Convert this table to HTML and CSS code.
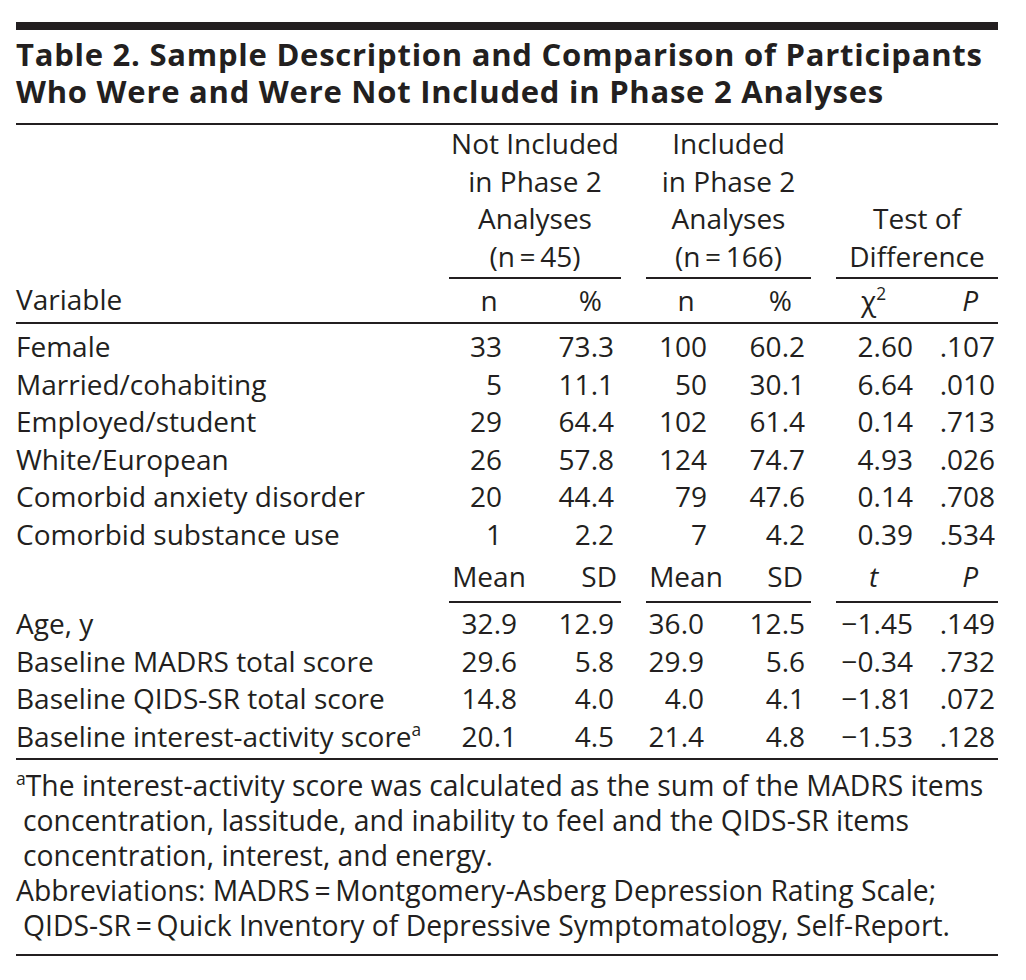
FILE: index.html
```html
<!DOCTYPE html>
<html lang="en">
<head>
<meta charset="utf-8">
<title>Table 2</title>
<link rel="stylesheet" href="styles.css">
</head>
<body>
<div class="page">
  <div class="toprule"></div>
  <h1 class="title">Table 2. Sample Description and Comparison of Participants<br>Who Were and Were Not Included in Phase 2 Analyses</h1>
  <table class="tbl">
    <colgroup>
      <col class="c-var">
      <col class="c-a">
      <col class="c-b">
      <col class="c-sp">
      <col class="c-c">
      <col class="c-d">
      <col class="c-sp">
      <col class="c-e">
      <col class="c-f">
    </colgroup>
    <thead>
      <tr class="grp">
        <th class="var"></th>
        <th colspan="2" class="gh">Not Included<br>in Phase 2<br>Analyses<br>(n&#8201;=&#8201;45)</th>
        <th class="sp"></th>
        <th colspan="2" class="gh">Included<br>in Phase 2<br>Analyses<br>(n&#8201;=&#8201;166)</th>
        <th class="sp"></th>
        <th colspan="2" class="gh">Test of<br>Difference</th>
      </tr>
      <tr class="sub first">
        <th class="var">Variable</th>
        <th class="h1">n</th>
        <th class="h2">%</th>
        <th class="sp"></th>
        <th class="h3">n</th>
        <th class="h4">%</th>
        <th class="sp"></th>
        <th class="h5">&#967;<sup>2</sup></th>
        <th class="h6"><i>P</i></th>
      </tr>
    </thead>
    <tbody>
      <tr class="top"><td class="var">Female</td><td class="n1">33</td><td class="v2">73.3</td><td class="sp"></td><td class="n3">100</td><td class="v4">60.2</td><td class="sp"></td><td class="v5">2.60</td><td class="v6">.107</td></tr>
      <tr><td class="var">Married/cohabiting</td><td class="n1">5</td><td class="v2">11.1</td><td class="sp"></td><td class="n3">50</td><td class="v4">30.1</td><td class="sp"></td><td class="v5">6.64</td><td class="v6">.010</td></tr>
      <tr><td class="var">Employed/student</td><td class="n1">29</td><td class="v2">64.4</td><td class="sp"></td><td class="n3">102</td><td class="v4">61.4</td><td class="sp"></td><td class="v5">0.14</td><td class="v6">.713</td></tr>
      <tr><td class="var">White/European</td><td class="n1">26</td><td class="v2">57.8</td><td class="sp"></td><td class="n3">124</td><td class="v4">74.7</td><td class="sp"></td><td class="v5">4.93</td><td class="v6">.026</td></tr>
      <tr><td class="var">Comorbid anxiety disorder</td><td class="n1">20</td><td class="v2">44.4</td><td class="sp"></td><td class="n3">79</td><td class="v4">47.6</td><td class="sp"></td><td class="v5">0.14</td><td class="v6">.708</td></tr>
      <tr><td class="var">Comorbid substance use</td><td class="n1">1</td><td class="v2">2.2</td><td class="sp"></td><td class="n3">7</td><td class="v4">4.2</td><td class="sp"></td><td class="v5">0.39</td><td class="v6">.534</td></tr>
      <tr class="sub mid">
        <td class="var"></td>
        <td class="h1 ul">Mean</td>
        <td class="hsd ul">SD</td>
        <td class="sp"></td>
        <td class="h3 ul">Mean</td>
        <td class="hsd4 ul">SD</td>
        <td class="sp"></td>
        <td class="h5 ul"><i>t</i></td>
        <td class="h6 ul"><i>P</i></td>
      </tr>
      <tr class="top2"><td class="var">Age, y</td><td class="m1">32.9</td><td class="v2">12.9</td><td class="sp"></td><td class="m3">36.0</td><td class="v4">12.5</td><td class="sp"></td><td class="v5">&minus;1.45</td><td class="v6">.149</td></tr>
      <tr><td class="var">Baseline MADRS total score</td><td class="m1">29.6</td><td class="v2">5.8</td><td class="sp"></td><td class="m3">29.9</td><td class="v4">5.6</td><td class="sp"></td><td class="v5">&minus;0.34</td><td class="v6">.732</td></tr>
      <tr><td class="var">Baseline QIDS-SR total score</td><td class="m1">14.8</td><td class="v2">4.0</td><td class="sp"></td><td class="m3">4.0</td><td class="v4">4.1</td><td class="sp"></td><td class="v5">&minus;1.81</td><td class="v6">.072</td></tr>
      <tr class="last"><td class="var">Baseline interest-activity score<sup class="fn">a</sup></td><td class="m1">20.1</td><td class="v2">4.5</td><td class="sp"></td><td class="m3">21.4</td><td class="v4">4.8</td><td class="sp"></td><td class="v5">&minus;1.53</td><td class="v6">.128</td></tr>
    </tbody>
  </table>
  <div class="notes">
    <p class="note"><sup class="fn">a</sup>The interest-activity score was calculated as the sum of the MADRS items<br>concentration, lassitude, and inability to feel and the QIDS-SR items<br>concentration, interest, and energy.</p>
    <p class="note">Abbreviations: MADRS&#8201;=&#8201;Montgomery-Asberg Depression Rating Scale;<br>QIDS-SR&#8201;=&#8201;Quick Inventory of Depressive Symptomatology, Self-Report.</p>
  </div>
</div>
</body>
</html>
```

FILE: styles.css
```css
html, body {
  margin: 0;
  padding: 0;
  background: #ffffff;
}

body {
  color: #231f20;
  font-family: "Open Sans", "Noto Sans", "Liberation Sans", sans-serif;
}

.page {
  width: 982px;
  margin-left: 16px;
  padding-top: 22px;
}

.toprule {
  height: 8px;
  background: #231f20;
}

.title {
  margin: 0;
  padding: 6px 0 13px;
  font-size: 31px;
  line-height: 37px;
  font-weight: 700;
  letter-spacing: 0.75px;
  white-space: nowrap;
  border-bottom: 2px solid #231f20;
}

.tbl {
  width: 982px;
  border-collapse: collapse;
  table-layout: fixed;
  font-size: 28px;
}

.c-var { width: 433px; }
.c-a { width: 80px; }
.c-b { width: 92px; }
.c-sp { width: 25px; }
.c-c { width: 80px; }
.c-d { width: 85px; }
.c-e { width: 85px; }
.c-f { width: 77px; }

.tbl th,
.tbl td {
  padding: 0;
  height: 37.5px;
  line-height: 37.5px;
  font-weight: 400;
  white-space: nowrap;
  text-align: right;
  vertical-align: middle;
}

.tbl th.var,
.tbl td.var {
  text-align: left;
}

.grp th {
  vertical-align: bottom;
  height: auto;
}

.grp th.gh {
  text-align: center;
  line-height: 37.5px;
  padding-bottom: 2px;
  border-bottom: 2px solid #231f20;
}

.sub.first th {
  height: 43px;
  border-bottom: 2px solid #231f20;
}

.h1, .h3 { text-align: center !important; }
.h2 { padding-right: 19px !important; }
.h4 { padding-right: 19px !important; }
.h5 { text-align: center !important; padding-right: 10px !important; }
.h6 { padding-right: 20px !important; }
.hsd { padding-right: 4px !important; }
.hsd4 { padding-right: 8px !important; }

.tbl sup {
  font-size: 0.62em;
  line-height: 0;
  vertical-align: 0.62em;
}

.n1 { padding-right: 27px !important; }
.m1 { padding-right: 12px !important; }
.v2 { padding-right: 7px !important; }
.n3 { padding-right: 19px !important; }
.m3 { padding-right: 22px !important; }
.v4 { padding-right: 6px !important; }
.v5 { padding-right: 8px !important; }
.v6 { padding-right: 3px !important; }

tr.top td {
  padding-top: 4px;
}

tr.top2 td {
  padding-top: 2px;
}

tr.sub.mid td {
  height: 48px;
  padding-top: 0;
}

tr.sub.mid td.ul {
  border-bottom: 2px solid #231f20;
}

tr.last td {
  padding-bottom: 3px;
  border-bottom: 2px solid #231f20;
}

.notes {
  padding: 8px 0 11px;
  border-bottom: 2px solid #231f20;
}

.note {
  margin: 0;
  font-size: 28.3px;
  line-height: 35px;
  padding-left: 7px;
  text-indent: -7px;
  white-space: nowrap;
}

.note sup.fn {
  font-size: 0.62em;
  line-height: 0;
  vertical-align: 0.62em;
}
```
